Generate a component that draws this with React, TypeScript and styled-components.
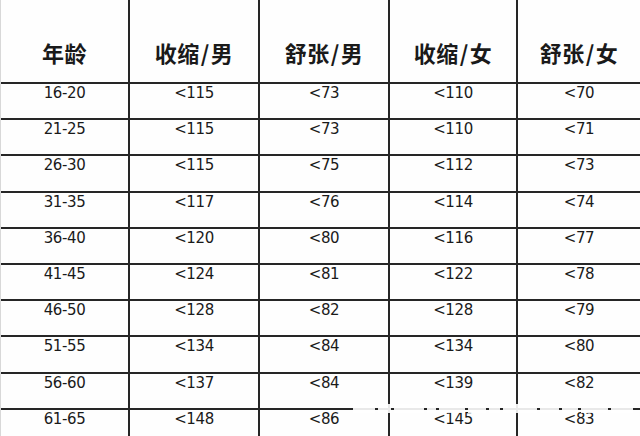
import React from "react";
import styled, { createGlobalStyle } from "styled-components";

const Global = createGlobalStyle`
  html, body { margin: 0; padding: 0; background: #ffffff; }
  body { width: 640px; height: 436px; overflow: hidden; }
  #root { width: 640px; height: 436px; }
`;

const Page = styled.div`
  position: relative;
  width: 640px;
  height: 436px;
  overflow: hidden;
  background: #fefefe;
  border-left: 1px solid #d8d8d8;
  box-sizing: border-box;
`;

const Table = styled.div`
  display: grid;
  grid-template-columns: 127px 130px 130px 128px 1fr;
  grid-template-rows: 82px repeat(10, 36.2px);
  color: #1a1a1a;
`;

const HeadCell = styled.div<{ $first?: boolean }>`
  border-left: ${(p) => (p.$first ? "none" : "2px solid #262626")};
  padding-top: 38px;
  box-sizing: border-box;
  text-align: center;
  font-family: "Noto Sans CJK SC", "Noto Sans", sans-serif;
  font-weight: 700;
  font-size: 22px;
  line-height: 28px;
  letter-spacing: 0.5px;
`;

const Slash = styled.span`
  margin: 0 1px;
`;

const Cell = styled.div<{ $first?: boolean }>`
  border-left: ${(p) => (p.$first ? "none" : "2px solid #262626")};
  border-top: 2px solid #262626;
  box-sizing: border-box;
  text-align: center;
  font-family: "DejaVu Sans", Verdana, sans-serif;
  font-size: 15px;
  line-height: 19px;
  letter-spacing: -0.4px;
`;

const Watermark = styled.div`
  position: absolute;
  left: 352px;
  top: 404px;
  width: 280px;
  height: 9px;
  display: flex;
  gap: 3px;
  pointer-events: none;
`;

const Blot = styled.span<{ $w: number }>`
  display: block;
  width: ${(p) => p.$w}px;
  height: 100%;
  background: rgba(255, 255, 255, 0.9);
`;

const headers: [string, string][] = [
  ["年龄", ""],
  ["收缩", "男"],
  ["舒张", "男"],
  ["收缩", "女"],
  ["舒张", "女"],
];
const rows: string[][] = [
  ["16-20", "<115", "<73", "<110", "<70"],
  ["21-25", "<115", "<73", "<110", "<71"],
  ["26-30", "<115", "<75", "<112", "<73"],
  ["31-35", "<117", "<76", "<114", "<74"],
  ["36-40", "<120", "<80", "<116", "<77"],
  ["41-45", "<124", "<81", "<122", "<78"],
  ["46-50", "<128", "<82", "<128", "<79"],
  ["51-55", "<134", "<84", "<134", "<80"],
  ["56-60", "<137", "<84", "<139", "<82"],
  ["61-65", "<148", "<86", "<145", "<83"],
];

const blots = [22, 14, 30, 10, 26, 18, 12, 34, 20, 16, 28, 22];

export default function App() {
  return (
    <>
      <Global />
      <Page>
        <Table>
          {headers.map(([a, b], i) => (
            <HeadCell key={i} $first={i === 0}>
              {a}
              {b && (
                <>
                  <Slash>/</Slash>
                  {b}
                </>
              )}
            </HeadCell>
          ))}
          {rows.map((r, ri) =>
            r.map((v, ci) => (
              <Cell key={`${ri}-${ci}`} $first={ci === 0}>
                {v}
              </Cell>
            ))
          )}
        </Table>
        <Watermark>
          {blots.map((w, i) => (
            <Blot key={i} $w={w} />
          ))}
        </Watermark>
      </Page>
    </>
  );
}
